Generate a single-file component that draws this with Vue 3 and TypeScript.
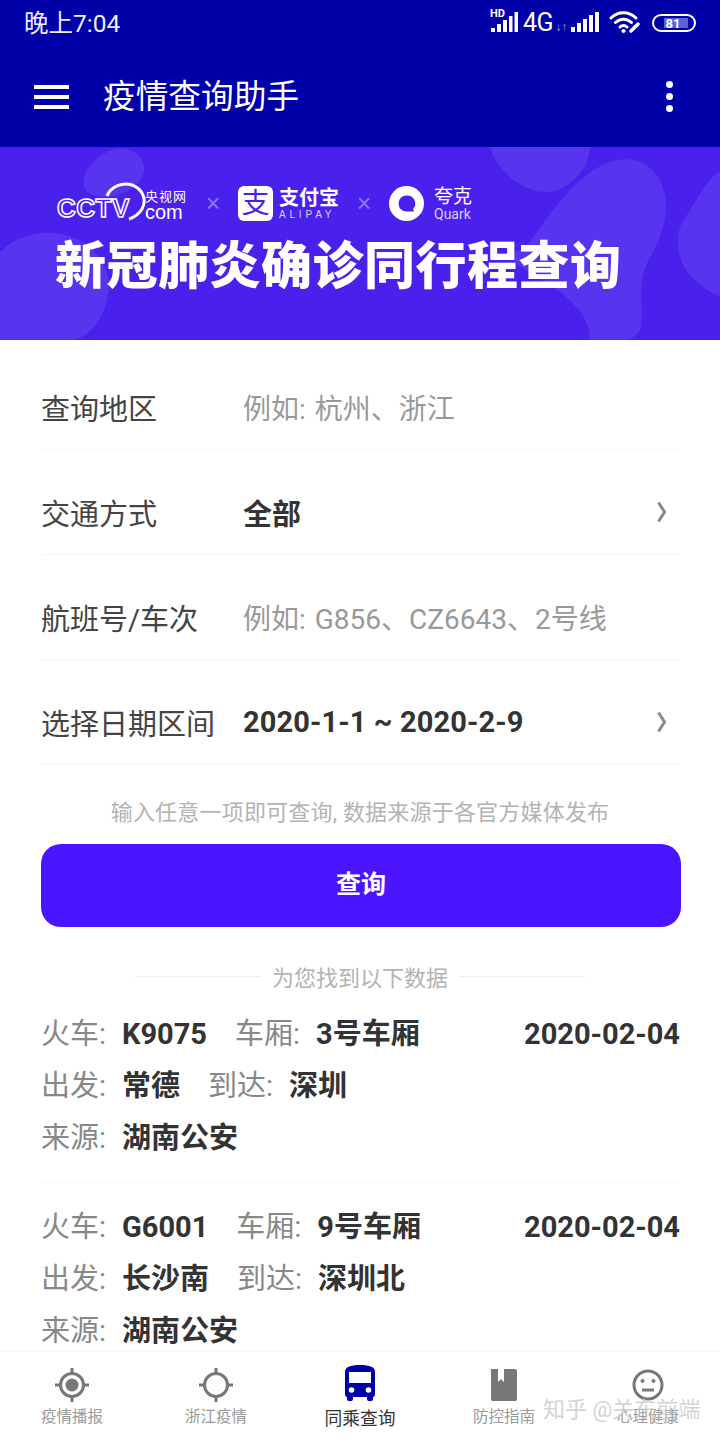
<script setup lang="ts">
interface FormRow {
  label: string;
  value: string;
  placeholder?: boolean;
  arrow?: boolean;
}
interface Field {
  label: string;
  value: string;
}
interface Trip {
  lines: Field[][];
  date: string;
}
interface Tab {
  label: string;
  icon: string;
  active?: boolean;
}

const formRows: FormRow[] = [
  { label: "查询地区", value: "例如: 杭州、浙江", placeholder: true },
  { label: "交通方式", value: "全部", arrow: true },
  { label: "航班号/车次", value: "例如: G856、CZ6643、2号线", placeholder: true },
  { label: "选择日期区间", value: "2020-1-1 ~ 2020-2-9", arrow: true },
];

const trips: Trip[] = [
  {
    date: "2020-02-04",
    lines: [
      [
        { label: "火车", value: "K9075" },
        { label: "车厢", value: "3号车厢" },
      ],
      [
        { label: "出发", value: "常德" },
        { label: "到达", value: "深圳" },
      ],
      [{ label: "来源", value: "湖南公安" }],
    ],
  },
  {
    date: "2020-02-04",
    lines: [
      [
        { label: "火车", value: "G6001" },
        { label: "车厢", value: "9号车厢" },
      ],
      [
        { label: "出发", value: "长沙南" },
        { label: "到达", value: "深圳北" },
      ],
      [{ label: "来源", value: "湖南公安" }],
    ],
  },
];

const tabs: Tab[] = [
  { label: "疫情播报", icon: "target" },
  { label: "浙江疫情", icon: "ring" },
  { label: "同乘查询", icon: "bus", active: true },
  { label: "防控指南", icon: "book" },
  { label: "心理健康", icon: "face" },
];
</script>

<template>
  <div class="page">
    <header class="top">
      <div class="status">
        <span class="time">晚上7:04</span>
        <div class="status-icons">
          <div class="hd-signal">
            <span class="hd">HD</span>
            <svg width="28" height="22" viewBox="0 0 28 22" fill="#fff">
              <rect x="1" y="17" width="4" height="4" />
              <rect x="7" y="13" width="4" height="8" />
              <rect x="13" y="9" width="4" height="12" />
              <rect x="19" y="5" width="3.5" height="16" />
              <rect x="24.5" y="1" width="3.5" height="20" />
            </svg>
          </div>
          <span class="net">4G</span>
          <span class="arrows">↓↑</span>
          <svg class="signal" width="28" height="22" viewBox="0 0 28 22" fill="#fff">
            <rect x="0" y="16" width="4" height="5" />
            <rect x="6" y="12" width="4" height="9" />
            <rect x="12" y="8" width="4" height="13" />
            <rect x="18" y="4" width="4" height="17" />
            <rect x="24" y="1" width="4" height="20" />
          </svg>
          <svg class="wifi" width="32" height="24" viewBox="0 0 32 24" fill="none" stroke="#fff" stroke-width="3" stroke-linecap="round">
            <path d="M2 8C9 1 20 1 27 8" />
            <path d="M6.500 12.500C11 8 18 8 22.500 12.500" />
            <path d="M11 17C13 15 16 15 18 17" />
            <circle cx="14.500" cy="21" r="1.600" fill="#fff" stroke-width="1" />
            <path d="M22 21L29 14" stroke-width="3.500" />
          </svg>
          <div class="battery">
            <div class="battery-fill"></div>
            <span>81</span>
          </div>
        </div>
      </div>
      <div class="appbar">
        <div class="menu"><i></i><i></i><i></i></div>
        <h1>疫情查询助手</h1>
        <div class="more"><i></i><i></i><i></i></div>
      </div>
    </header>

    <main class="content">
      <section class="banner">
        <svg class="blobs" width="720" height="193" viewBox="0 0 720 193" fill="#5834ef">
          <path d="M85 28C92 8 122 -8 138 8C152 22 140 42 118 48C96 54 78 46 85 28Z" />
          <path d="M0 105C30 75 85 80 105 120C118 150 95 193 70 193H0Z" />
          <path d="M490 0H590C590 20 570 45 545 45C520 45 495 20 490 0Z" />
          <path d="M530 95C560 50 600 0 640 15C670 28 675 70 650 110C628 150 660 193 620 193H590C590 150 530 130 515 115C505 105 522 105 530 95Z" />
          <path d="M680 80C695 55 708 30 720 25V150C700 140 670 120 680 80Z" />
        </svg>
        <div class="logos">
          <div class="cctv">
            <svg class="cctv-arc" width="46" height="40" viewBox="0 0 46 40" fill="none" stroke="#fff" stroke-width="3">
              <path d="M4 14C8 4 20 0 29 3C40 7 44 18 39 27C36 32 32 35 26 37" />
            </svg>
            <span class="cctv-mark">CCTV</span>
            <div class="cctv-side">
              <span class="cn">央视网</span>
              <span class="com">com</span>
            </div>
          </div>
          <span class="times">×</span>
          <div class="alipay">
            <span class="alipay-icon">支</span>
            <div class="alipay-text">
              <span class="cn">支付宝</span>
              <span class="en">ALIPAY</span>
            </div>
          </div>
          <span class="times">×</span>
          <div class="quark">
            <svg width="35" height="35" viewBox="0 0 35 35">
              <circle cx="17.500" cy="17.500" r="17.500" fill="#fff" />
              <path d="M17.500 9.500A8 8 0 1 0 17.500 25.500H25L24 23A8 8 0 0 0 17.500 9.500Z" fill="#4a20ec" />
            </svg>
            <div class="quark-text">
              <span class="cn">夸克</span>
              <span class="en">Quark</span>
            </div>
          </div>
        </div>
        <h2>新冠肺炎确诊同行程查询</h2>
      </section>

      <section class="form">
        <div v-for="row in formRows" :key="row.label" class="form-row">
          <span class="form-label">{{ row.label }}</span>
          <span class="form-value" :class="{ placeholder: row.placeholder }">{{ row.value }}</span>
          <svg v-if="row.arrow" class="chevron" width="12" height="22" viewBox="0 0 12 22" fill="none" stroke="#8a8a8a" stroke-width="3">
            <path d="M2.500 1.500L8.500 11L2.500 20.500" />
          </svg>
        </div>
      </section>

      <p class="hint">输入任意一项即可查询, 数据来源于各官方媒体发布</p>
      <button class="search">查询</button>

      <div class="divider"><i></i><span>为您找到以下数据</span><i></i></div>

      <section class="trips">
        <article v-for="(trip, index) in trips" :key="index" class="trip">
          <div v-for="(line, i) in trip.lines" :key="i" class="trip-line">
            <span v-for="field in line" :key="field.label" class="field">
              <span class="field-label">{{ field.label }}:</span>
              <b>{{ field.value }}</b>
            </span>
            <b v-if="i === 0" class="date">{{ trip.date }}</b>
          </div>
        </article>
      </section>
    </main>

    <nav class="tabs">
      <div v-for="tab in tabs" :key="tab.label" class="tab" :class="{ active: tab.active }">
        <svg v-if="tab.icon === 'target' || tab.icon === 'ring'" width="36" height="36" viewBox="0 0 36 36" fill="none" stroke="#777" stroke-width="3">
          <circle cx="18" cy="18" r="11.500" />
          <path d="M18 1V6M18 30V35M1 18H6M30 18H35" />
          <circle v-if="tab.icon === 'target'" cx="18" cy="18" r="6.500" fill="#777" stroke="none" />
        </svg>
        <svg v-else-if="tab.icon === 'bus'" width="36" height="38" viewBox="0 0 36 38">
          <path d="M3 8C3 3 8 1 18 1S33 3 33 8V30C33 32 32 33 31 33V35C31 36.500 30 37 29 37H27C26 37 25 36.500 25 35V33H11V35C11 36.500 10 37 9 37H7C6 37 5 36.500 5 35V33C4 33 3 32 3 30Z" fill="#0000a8" />
          <rect x="7" y="8" width="22" height="11" fill="#fff" />
          <circle cx="9.500" cy="26" r="2.800" fill="#fff" />
          <circle cx="26.500" cy="26" r="2.800" fill="#fff" />
        </svg>
        <svg v-else-if="tab.icon === 'book'" width="36" height="36" viewBox="0 0 36 36">
          <path d="M5 2H12V15L15 12L18 15V2H29C30 2 31 3 31 4V32C31 33.500 30 34 29 34H7C6 34 5 33.500 5 32Z" fill="#777" />
        </svg>
        <svg v-else width="36" height="36" viewBox="0 0 36 36" fill="none" stroke="#777" stroke-width="3">
          <circle cx="18" cy="18" r="14" />
          <circle cx="12.500" cy="14" r="2" fill="#777" stroke="none" />
          <circle cx="23.500" cy="14" r="2" fill="#777" stroke="none" />
          <path d="M12 23H24" />
        </svg>
        <span>{{ tab.label }}</span>
      </div>
    </nav>

    <span class="watermark">知乎 @关东前端</span>
  </div>
</template>

<style>
html,
body {
  margin: 0;
  background: #fff;
}
</style>

<style scoped>
.page {
  position: relative;
  display: flex;
  flex-direction: column;
  width: 720px;
  height: 1440px;
  overflow: hidden;
  background: #fff;
  font-family: Roboto, "Noto Sans CJK SC", sans-serif;
  color: #333;
}
.top {
  background: #0000a8;
  color: #fff;
  flex: none;
}
.status {
  display: flex;
  align-items: center;
  justify-content: space-between;
  height: 46px;
  padding: 0 24px;
}
.time {
  font-size: 24.500px;
  margin-top: -3px;
  color: #eef;
}
.status-icons {
  display: flex;
  align-items: center;
}
.hd-signal {
  position: relative;
  width: 28px;
  height: 22px;
  margin-top: -2px;
}
.hd {
  position: absolute;
  left: 0;
  top: -3px;
  font-size: 11px;
  font-weight: 700;
  line-height: 12px;
}
.hd-signal svg {
  display: block;
}
.net {
  margin-left: 5px;
  font-size: 25px;
  line-height: 30px;
  letter-spacing: -0.5px;
}
.arrows {
  width: 18px;
  font-size: 7px;
  margin-top: 8px;
  padding-left: 2px;
  box-sizing: border-box;
  color: #aab;
  letter-spacing: -1px;
}
.signal {
  margin-top: -2px;
}
.wifi {
  margin-left: 10px;
  margin-top: -2px;
}
.battery {
  position: relative;
  width: 44px;
  height: 18px;
  margin-left: 11px;
  border: 2px solid #fff;
  border-radius: 10px;
  box-sizing: border-box;
  overflow: hidden;
  display: flex;
  align-items: center;
  justify-content: center;
}
.battery-fill {
  position: absolute;
  left: 10px;
  top: 2px;
  bottom: 2px;
  width: 24px;
  background: #5a63d8;
}
.battery span {
  position: relative;
  font-size: 13px;
  font-weight: 700;
  margin-left: -2px;
}
.appbar {
  display: flex;
  align-items: center;
  height: 101px;
  padding: 0 0 0 34px;
}
.menu {
  display: flex;
  flex-direction: column;
  gap: 6px;
  width: 35px;
}
.menu i {
  display: block;
  height: 4px;
  background: #fff;
}
h1 {
  margin: 0 0 0 34px;
  font-size: 32.700px;
  font-weight: 400;
  line-height: 40px;
  color: #fff;
}
.more {
  display: flex;
  flex-direction: column;
  gap: 5px;
  margin-left: auto;
  margin-right: 47px;
}
.more i {
  display: block;
  width: 7px;
  height: 7px;
  border-radius: 50%;
  background: #fff;
}
.content {
  flex: 1;
  min-height: 0;
  overflow: hidden;
}
.banner {
  position: relative;
  height: 193px;
  padding: 36px 0 0 57px;
  box-sizing: border-box;
  background: #4a20ec;
  overflow: hidden;
  color: #fff;
}
.blobs {
  position: absolute;
  left: 0;
  top: 0;
}
.logos {
  position: relative;
  display: flex;
  align-items: center;
  height: 40px;
}
.cctv {
  position: relative;
  display: flex;
  align-items: flex-end;
  width: 131px;
  height: 40px;
}
.cctv-arc {
  position: absolute;
  left: 46px;
  top: -1px;
}
.cctv-mark {
  font-family: "Liberation Sans", sans-serif;
  font-size: 26px;
  font-weight: 700;
  line-height: 26px;
  letter-spacing: 0.5px;
  color: transparent;
  -webkit-text-stroke: 1.5px #fff;
  margin-bottom: 2px;
}
.cctv-side {
  position: absolute;
  left: 88px;
  top: 6px;
  display: flex;
  flex-direction: column;
  align-items: flex-start;
}
.cctv-side .cn {
  font-size: 13px;
  line-height: 15px;
  letter-spacing: 1px;
}
.cctv-side .com {
  font-family: "Liberation Sans", sans-serif;
  font-size: 20px;
  line-height: 17px;
}
.times {
  font-family: "Liberation Sans", sans-serif;
  width: 50px;
  text-align: center;
  font-size: 25px;
  color: #8e79f5;
}
.alipay {
  display: flex;
  align-items: center;
}
.alipay-icon {
  display: flex;
  align-items: center;
  justify-content: center;
  width: 35px;
  height: 35px;
  border-radius: 6px;
  background: #fff;
  color: #4a20ec;
  font-size: 28px;
  line-height: 35px;
}
.alipay-text {
  display: flex;
  flex-direction: column;
  margin-left: 6px;
}
.alipay-text .cn {
  font-size: 20px;
  font-weight: 700;
  line-height: 22px;
}
.alipay-text .en {
  font-family: "Liberation Sans", sans-serif;
  font-size: 10px;
  line-height: 11px;
  letter-spacing: 3.800px;
  color: #d8d0fb;
}
.quark {
  display: flex;
  align-items: center;
}
.quark-text {
  display: flex;
  flex-direction: column;
  margin-left: 10px;
}
.quark-text .cn {
  font-size: 19px;
  line-height: 22px;
}
.quark-text .en {
  font-size: 14px;
  line-height: 13px;
  color: #d8d0fb;
}
h2 {
  position: relative;
  margin: 16px 0 0 -2px;
  font-size: 51px;
  font-weight: 900;
  line-height: 56px;
  letter-spacing: 0.5px;
  white-space: nowrap;
  color: #fff;
}
.form {
  padding: 5px 40px 0 41px;
}
.form-row {
  display: flex;
  align-items: center;
  height: 105px;
  padding: 20px 0 0;
  box-sizing: border-box;
  border-bottom: 1px solid #f6f6f6;
  font-size: 29px;
}
.form-label {
  width: 202px;
  flex: none;
  color: #444;
  white-space: nowrap;
}
.form-value {
  font-weight: 700;
  letter-spacing: 0.1px;
  color: #333;
  white-space: nowrap;
}
.form-value.placeholder {
  font-weight: 400;
  font-size: 28px;
  letter-spacing: 0;
  word-spacing: 2px;
  color: #999;
}
.chevron {
  margin-left: auto;
  margin-right: 12px;
}
.hint {
  margin: 33px 0 0;
  font-size: 22px;
  line-height: 30px;
  letter-spacing: 0.2px;
  text-align: center;
  color: #b3b3b3;
}
.search {
  display: block;
  width: 640px;
  height: 83px;
  margin: 16px 0 0 41px;
  padding: 0 0 7px;
  border: 0;
  border-radius: 20px;
  background: #4a14ff;
  color: #fff;
  font-family: inherit;
  font-size: 25px;
  font-weight: 700;
}
.divider {
  display: flex;
  align-items: center;
  justify-content: center;
  gap: 11px;
  height: 34px;
  margin-top: 32px;
  font-size: 22px;
  color: #b3b3b3;
}
.divider i {
  display: block;
  width: 126px;
  height: 1px;
  background: #eee;
}
.trips {
  margin-top: 15px;
  padding: 0 40px 0 41px;
}
.trip {
  padding-bottom: 18px;
  margin-bottom: 18px;
  border-bottom: 1px solid #f6f6f6;
}
.trip-line {
  display: flex;
  align-items: baseline;
  height: 52px;
  line-height: 52px;
  font-size: 29px;
  white-space: nowrap;
}
.field {
  display: flex;
  align-items: baseline;
  margin-right: 28px;
}
.field-label {
  width: 81px;
  flex: none;
  color: #888;
}
.field b,
.date {
  font-weight: 700;
  color: #333;
}
.date {
  margin-left: auto;
}
.tabs {
  display: grid;
  grid-template-columns: repeat(5, 144px);
  flex: none;
  position: relative;
  height: 88px;
  background: #fff;
  box-shadow: 0 -1px 3px rgba(0, 0, 0, 0.04);
}
.tab {
  display: flex;
  flex-direction: column;
  align-items: center;
  padding-top: 15px;
  box-sizing: border-box;
  font-size: 15.500px;
  line-height: 20px;
  color: #999;
}
.tab svg {
  display: block;
  flex: none;
}
.tab span {
  margin-top: 4px;
}
.tab.active {
  padding-top: 12px;
  font-size: 17.800px;
  color: #333;
}
.tab.active span {
  margin-top: 7px;
}
.watermark {
  position: absolute;
  left: 543px;
  top: 1395px;
  font-size: 22px;
  line-height: 30px;
  color: rgba(200, 200, 200, 0.8);
  white-space: nowrap;
}
</style>
